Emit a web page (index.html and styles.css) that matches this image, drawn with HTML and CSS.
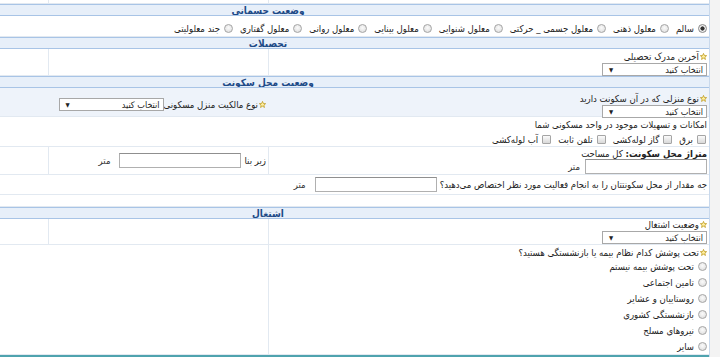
FILE: index.html
```html
<!DOCTYPE html>
<html lang="fa" dir="rtl">
<head>
    <meta charset="UTF-8">
    <meta name="viewport" content="width=device-width, initial-scale=1.0">
    <title>فرم اطلاعات</title>
    <link rel="stylesheet" href="styles.css">
</head>
<body>
    <div class="form">
        <div class="row cols3 stub">
            <div class="cell"></div>
            <div class="cell"></div>
            <div class="cell"></div>
        </div>

        <div class="section">وضعیت جسمانی</div>
        <div class="row row-health">
            <div class="cell radios-inline">
                <label><input type="radio" name="health" checked>سالم</label>
                <label><input type="radio" name="health">معلول ذهنی</label>
                <label><input type="radio" name="health">معلول جسمی _ حرکتی</label>
                <label><input type="radio" name="health">معلول شنوایی</label>
                <label><input type="radio" name="health">معلول بینایی</label>
                <label><input type="radio" name="health">معلول روانی</label>
                <label><input type="radio" name="health">معلول گفتاری</label>
                <label><input type="radio" name="health">جند معلولیتی</label>
            </div>
        </div>

        <div class="section">تحصیلات</div>
        <div class="row cols3 row-edu">
            <div class="cell">
                <div class="label"><svg class="star" viewBox="0 0 10 10"><path d="M5 0.6 6.3 3.6 9.5 3.8 7 5.9 7.8 9.2 5 7.4 2.2 9.2 3 5.9 0.5 3.8 3.7 3.6Z"/></svg>آخرین مدرک تحصیلی</div>
                <span class="select"><span>انتخاب کنید</span><span class="arrow">▼</span></span>
            </div>
            <div class="cell"></div>
            <div class="cell"></div>
        </div>

        <div class="section">وضعیت محل سکونت</div>
        <div class="row cols3 row-house tinted">
            <div class="cell">
                <div class="label"><svg class="star" viewBox="0 0 10 10"><path d="M5 0.6 6.3 3.6 9.5 3.8 7 5.9 7.8 9.2 5 7.4 2.2 9.2 3 5.9 0.5 3.8 3.7 3.6Z"/></svg>نوع منزلی که در آن سکونت دارید</div>
                <span class="select"><span>انتخاب کنید</span><span class="arrow">▼</span></span>
            </div>
            <div class="cell inline-cell">
                <span class="label"><svg class="star" viewBox="0 0 10 10"><path d="M5 0.6 6.3 3.6 9.5 3.8 7 5.9 7.8 9.2 5 7.4 2.2 9.2 3 5.9 0.5 3.8 3.7 3.6Z"/></svg>نوع مالکیت منزل مسکونی</span><span class="select"><span>انتخاب کنید</span><span class="arrow">▼</span></span>
            </div>
            <div class="cell"></div>
        </div>

        <div class="row row-facility">
            <div class="cell">
                <div class="label">امکانات و تسهیلات موجود در واحد مسکونی شما</div>
                <div class="checks">
                    <label><input type="checkbox">برق</label>
                    <label><input type="checkbox">گاز لوله‌کشی</label>
                    <label><input type="checkbox">تلفن ثابت</label>
                    <label><input type="checkbox">آب لوله‌کشی</label>
                </div>
            </div>
        </div>

        <div class="row cols3 row-area">
            <div class="cell">
                <div class="label"><b>متراژ محل سکونت:</b> کل مساحت</div>
                <div class="field"><input type="text" class="text"><span class="unit">متر</span></div>
            </div>
            <div class="cell">
                <div class="field"><span class="label">زیر بنا</span><input type="text" class="text"><span class="unit wide">متر</span></div>
            </div>
            <div class="cell"></div>
        </div>

        <div class="row row-activity">
            <div class="cell">
                <div class="field"><span class="label">جه مقدار از محل سکونتتان را به انجام فعالیت مورد نظر اختصاص می‌دهید؟</span><input type="text" class="text"><span class="unit wide">متر</span></div>
            </div>
        </div>

        <div class="row row-empty"><div class="cell"></div></div>

        <div class="section">اشتغال</div>
        <div class="row cols3 row-job">
            <div class="cell">
                <div class="label"><svg class="star" viewBox="0 0 10 10"><path d="M5 0.6 6.3 3.6 9.5 3.8 7 5.9 7.8 9.2 5 7.4 2.2 9.2 3 5.9 0.5 3.8 3.7 3.6Z"/></svg>وضعیت اشتغال</div>
                <span class="select"><span>انتخاب کنید</span><span class="arrow">▼</span></span>
            </div>
            <div class="cell"></div>
            <div class="cell"></div>
        </div>

        <div class="row cols2 row-insurance">
            <div class="cell">
                <div class="label"><svg class="star" viewBox="0 0 10 10"><path d="M5 0.6 6.3 3.6 9.5 3.8 7 5.9 7.8 9.2 5 7.4 2.2 9.2 3 5.9 0.5 3.8 3.7 3.6Z"/></svg>تحت پوشش کدام نظام بیمه یا بازنشستگی هستید؟</div>
                <div class="radios-list">
                    <label><input type="radio" name="ins">تحت پوشش بیمه نیستم</label>
                    <label><input type="radio" name="ins">تامین اجتماعی</label>
                    <label><input type="radio" name="ins">روستاییان و عشایر</label>
                    <label><input type="radio" name="ins">بازنشستگی کشوری</label>
                    <label><input type="radio" name="ins">نیروهای مسلح</label>
                    <label><input type="radio" name="ins">سایر</label>
                </div>
            </div>
            <div class="cell"></div>
        </div>

        <div class="footer-line"></div>
    </div>
</body>
</html>
```

FILE: styles.css
```css
html {
    overflow-x: hidden;
}
body {
    margin: 0;
    padding-right: 10px;
    background-color: #f3f3f3;
    font-family: "DejaVu Sans Condensed", "DejaVu Sans", sans-serif;
    font-size: 9.5px;
    color: #222;
}
.form {
    width: 882px;
    background-color: #fff;
    border-right: 1px solid #c9d9ec;
}

/* section headers */
.section {
    height: 10px;
    line-height: 12px;
    overflow: hidden;
    text-align: center;
    font-weight: bold;
    font-size: 10px;
    color: #1d4a87;
    background-color: #e7eff9;
    border-top: 1px solid #a8c4e6;
    border-bottom: 1px solid #a8c4e6;
}

/* rows */
.row {
    display: grid;
    grid-template-columns: 100%;
    box-sizing: border-box;
    border-bottom: 1px solid #e2e9f1;
}
.row.cols3 {
    grid-template-columns: 50% 25% 25%;
}
.row.cols2 {
    grid-template-columns: 50% 50%;
}
.cell {
    display: flex;
    flex-direction: column;
    justify-content: center;
    align-items: flex-start;
    padding: 0 2px;
}
.cols3 .cell,
.cols2 .cell {
    border-left: 1px solid #e2e9f1;
}
.cols3 .cell:last-child,
.cols2 .cell:last-child {
    border-left: none;
}
.row.tinted {
    background-color: #eef3fa;
}
.row.tinted .cell {
    border-left: none;
}
.cell.inline-cell {
    flex-direction: row;
    justify-content: flex-start;
    align-items: center;
    padding-top: 3px;
}

.stub { height: 4px; }
.row-health { height: 21px; }
.row-health .cell { padding-top: 5px; }
.row-edu { height: 27px; }
.row-edu .cell { padding-top: 2px; }
.row-house { height: 29px; }
.row-house .cell:first-child { padding-top: 5px; }
.row-facility { height: 30px; }
.row-area { height: 28px; }
.row-activity { height: 20px; }
.row-empty { height: 12px; }
.row-job { height: 26px; }
.row-insurance { height: 110px; }
.row-insurance .cell {
    justify-content: flex-start;
    padding-top: 2px;
}

.label {
    line-height: 11px;
    white-space: nowrap;
}
.label b {
    font-weight: bold;
}
.star {
    width: 7px;
    height: 7px;
    margin-left: 1px;
    fill: #fff0a0;
    stroke: #b8900e;
    stroke-width: 1;
}
.select {
    display: inline-flex;
    justify-content: space-between;
    align-items: center;
    box-sizing: border-box;
    width: 105px;
    height: 13px;
    margin-top: 1px;
    padding: 0 3px 0 6px;
    border: 1px solid #a8a8a8;
    background-color: #fff;
    font-size: 9px;
    color: #222;
}
.inline-cell .select {
    margin-top: 0;
}
.select .arrow {
    font-size: 6px;
}

.radios-inline {
    flex-direction: row;
    justify-content: flex-start;
    align-items: center;
    gap: 0 7px;
}
.radios-inline label,
.radios-list label,
.checks label {
    display: inline-flex;
    align-items: center;
    white-space: nowrap;
    line-height: 11px;
}
.radios-list {
    display: flex;
    flex-direction: column;
    gap: 5.1px;
    margin-top: 3px;
}
.checks {
    display: flex;
    gap: 0 7px;
    margin-top: 4px;
    margin-right: 1px;
}
input[type="radio"] {
    appearance: none;
    width: 9px;
    height: 9px;
    margin: 0 0 0 4px;
    border: 1px solid #a5a5a5;
    border-radius: 50%;
    background: radial-gradient(circle at 50% 40%, #fbfbfb, #d9d9d9);
}
input[type="radio"]:checked {
    background: radial-gradient(circle, #333 0 1.8px, #f4f4f4 2.4px, #dcdcdc);
    border-color: #888;
}
input[type="checkbox"] {
    appearance: none;
    width: 9px;
    height: 9px;
    margin: 0 0 0 4px;
    border: 1px solid #a5a5a5;
    border-radius: 1px;
    background: linear-gradient(#fbfbfb, #d9d9d9);
}

.field {
    display: flex;
    align-items: center;
}
.field .label {
    margin-left: 3px;
}
input.text {
    box-sizing: border-box;
    width: 122px;
    height: 15px;
    margin: 0;
    border: 1px solid #b0b0b0;
    border-top-color: #8f8f8f;
    background-color: #fff;
}
.unit {
    margin-right: 5px;
    color: #333;
}
.unit.wide {
    margin-right: 9px;
}
.footer-line {
    height: 60px;
    border-top: 2px solid #4fa3ae;
}
```
